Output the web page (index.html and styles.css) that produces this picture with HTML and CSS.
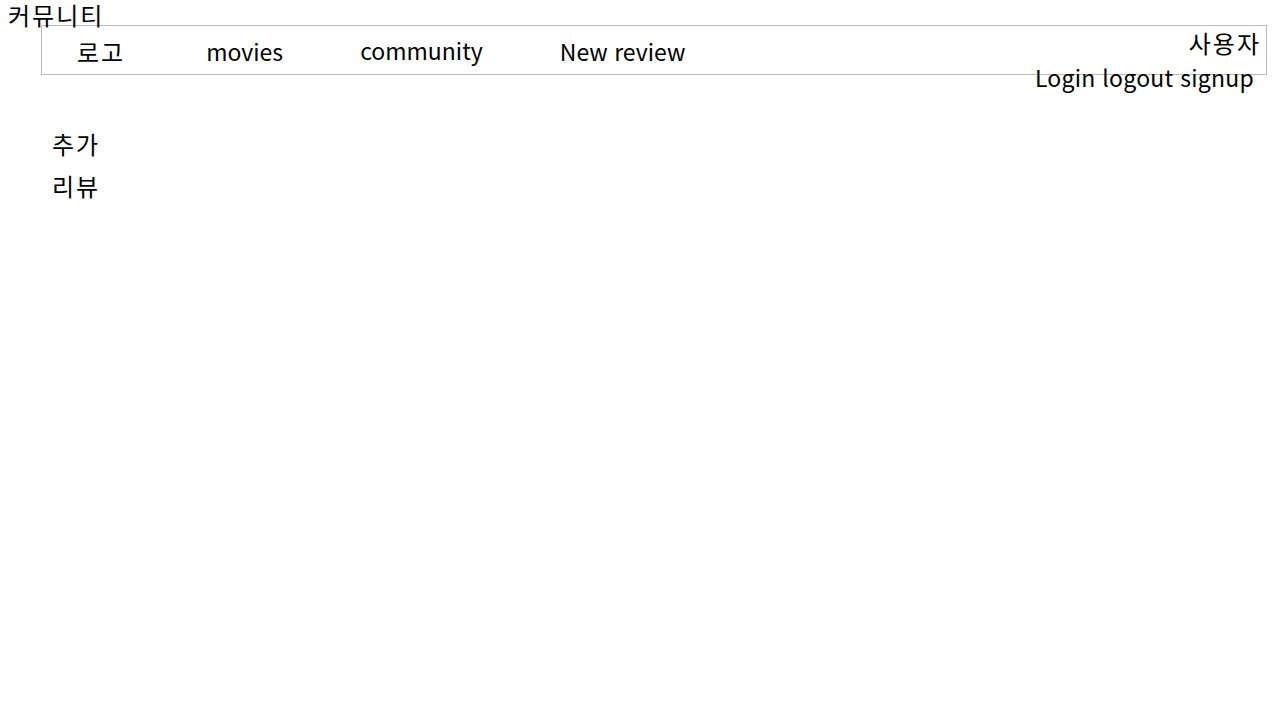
FILE: index.html
```html
<!DOCTYPE html>
<html lang="ko">
<head>
<meta charset="utf-8">
<title>커뮤니티</title>
<link rel="stylesheet" href="styles.css">
</head>
<body>
<div class="title ko">커뮤니티</div>
<nav class="navbar">
  <ul class="menu">
    <li class="logo ko">로고</li>
    <li class="movies">movies</li>
    <li class="community">community</li>
    <li>New review</li>
  </ul>
  <div class="user">
    <div class="user-name ko">사용자</div>
    <div class="user-links">Login logout signup</div>
  </div>
</nav>
<main class="content">
  <div class="item ko">추가</div>
  <div class="item ko">리뷰</div>
</main>
</body>
</html>
```
FILE: styles.css
```css
html, body {
  margin: 0;
  padding: 0;
  background: #fff;
}
body {
  font-family: "Noto Sans CJK KR", "Noto Sans", sans-serif;
  font-size: 23px;
  color: #000;
}
.ko {
  font-size: 24px;
  letter-spacing: 2px;
}
.title {
  height: 25px;
  line-height: 29px;
  padding-left: 8px;
}
.navbar {
  margin: 0 13px 0 41px;
  height: 48px;
  border: 1px solid #bbb;
  display: flex;
  justify-content: space-between;
}
.menu {
  list-style: none;
  margin: 0;
  padding: 3px 0 0 35px;
  display: flex;
  align-items: center;
  gap: 80px;
}
.menu li {
  line-height: 35px;
}
.logo {
  margin-right: 1px;
}
.movies {
  margin-right: -3px;
}
.community {
  margin-top: -3px;
  margin-right: -3px;
}
.user {
  display: flex;
  flex-direction: column;
  align-items: flex-end;
  padding-right: 5px;
  line-height: 35px;
}
.user-name {
  margin-top: -1px;
}
.user-links {
  margin-right: 7px;
  letter-spacing: 0.25px;
}
.content {
  padding: 48px 0 0 52px;
}
.item {
  line-height: 42px;
}
```
